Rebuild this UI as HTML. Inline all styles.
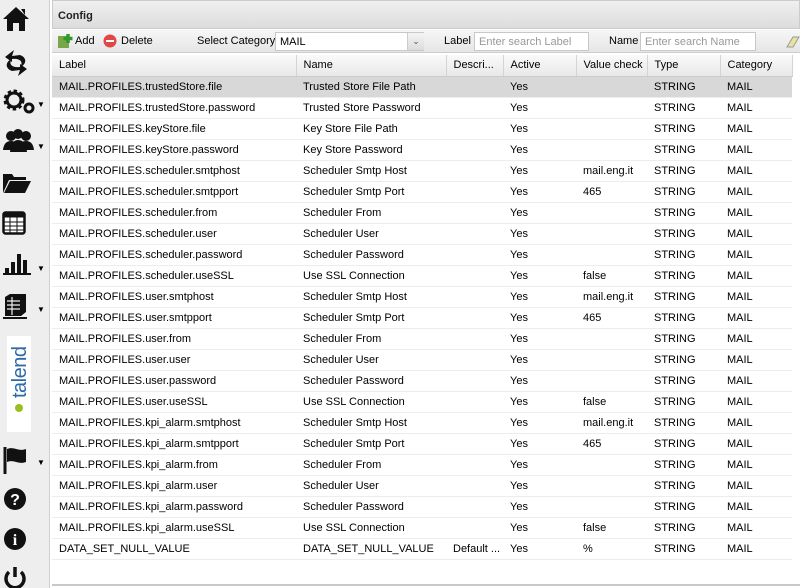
<!DOCTYPE html>
<html><head><meta charset="utf-8"><style>
*{box-sizing:border-box;margin:0;padding:0}
body{width:800px;height:588px;overflow:hidden;background:#fff;font-family:"Liberation Sans",sans-serif;font-size:11px;color:#000;position:relative}
#side{position:absolute;left:0;top:0;width:50px;height:588px;background:#eeeeee;border-right:1px solid #cfcfcf}
.ic{position:absolute;left:2px}
.dd{position:absolute;left:37px;font-size:8px}
#main{position:absolute;left:52px;top:0;width:748px;height:586px;border-bottom:2px solid #c8c8c8}
#hdr{height:29px;background:linear-gradient(#f0f0f0,#dcdcdc);border:1px solid #ccc;font-weight:bold;font-size:11px;padding:9px 0 0 5px;color:#222}
#tb{position:absolute;top:30px;left:0;width:748px;height:23px;background:linear-gradient(#f6f6f6,#e6e6e6);border-bottom:1px solid #ccc}
#tb span{position:absolute;top:5px;font-size:11px}
.inp{position:absolute;top:2px;height:19px;background:#fff;border:1px solid #c8c8c8;color:#999;padding:3px 4px;font-size:11px}
table{position:absolute;top:55px;left:0;width:740px;border-collapse:collapse;table-layout:fixed}
th{height:21px;background:linear-gradient(#fafafa,#e8e8e8);font-weight:normal;text-align:left;padding-left:7px;border-right:1px solid #d4d4d4;border-bottom:1px solid #ccc;white-space:nowrap;overflow:hidden}
td{height:21px;padding-left:7px;border-bottom:1px solid #ededed;white-space:nowrap;overflow:hidden}
tr.sel td{background:#d8d8d8}
</style></head><body>
<div id="side">
<svg class="ic" style="top:6px" width="28" height="26" viewBox="0 0 28 26"><path d="M14 1 L27 13 L23 13 L23 25 L17 25 L17 17 L11 17 L11 25 L5 25 L5 13 L1 13 Z M19 3 h4 v6 z" fill="#111"/></svg>
<svg class="ic" style="top:48px" width="28" height="30" viewBox="0 0 28 30"><path d="M12 2 L3 9 L10 14 L10 11 C18 10 22 14 18 19 C24 17 26 10 18 7 L10 8 Z M16 28 L25 21 L18 16 L18 19 C10 20 6 16 10 11 C4 13 2 20 10 23 L18 22 Z" fill="#111"/></svg>
<svg class="ic" style="top:88px" width="34" height="26" viewBox="0 0 34 26"><circle cx="12" cy="12" r="8" fill="none" stroke="#111" stroke-width="5" stroke-dasharray="3 2.3"/><circle cx="12" cy="12" r="7" fill="none" stroke="#111" stroke-width="3"/><circle cx="27" cy="20" r="4" fill="none" stroke="#111" stroke-width="3"/></svg><span class="dd" style="top:100px">▼</span>
<svg class="ic" style="top:128px" width="34" height="26" viewBox="0 0 34 26"><circle cx="9" cy="8" r="5" fill="#111"/><circle cx="24" cy="8" r="5" fill="#111"/><circle cx="16" cy="6" r="5" fill="#111"/><path d="M1 22 Q2 13 9 13 Q16 13 17 22Z M16 22 Q17 13 24 13 Q31 13 32 22Z M8 24 Q9 12 16 12 Q24 12 25 24Z" fill="#111"/></svg><span class="dd" style="top:142px">▼</span>
<svg class="ic" style="top:170px" width="30" height="24" viewBox="0 0 30 24"><path d="M1 4 h9 l2 3 h12 v3 H7 L1 23 Z M8 11 h21 L23 23 H2 Z" fill="#111"/></svg>
<svg class="ic" style="top:211px" width="26" height="26" viewBox="0 0 26 26"><rect x="1.5" y="1.5" width="21" height="21" rx="2" fill="#fff" stroke="#111" stroke-width="2.5"/><rect x="1.5" y="1.5" width="21" height="5" fill="#111"/><path d="M2 11h20M2 15h20M2 19h20M8 6v16M15 6v16" stroke="#111" stroke-width="1"/></svg>
<svg class="ic" style="top:252px" width="30" height="24" viewBox="0 0 30 24"><path d="M1 22h28" stroke="#111" stroke-width="2"/><rect x="3" y="16" width="4" height="6" fill="#111"/><rect x="9" y="10" width="4" height="12" fill="#111"/><rect x="15" y="2" width="4" height="20" fill="#111"/><rect x="21" y="8" width="4" height="14" fill="#111"/></svg><span class="dd" style="top:264px">▼</span>
<svg class="ic" style="top:292px" width="28" height="28" viewBox="0 0 28 28"><path d="M3 5 L8 2 H24 V20 L19 24 H3 Z" fill="#111"/><path d="M5 9h13M5 13h13M5 17h13M10 5v18" stroke="#eee" stroke-width="1.2"/><path d="M1 26h24" stroke="#111" stroke-width="2"/></svg><span class="dd" style="top:305px">▼</span>
<div style="position:absolute;left:7px;top:336px;width:24px;height:96px;background:#fff"></div>
<div style="position:absolute;left:9px;top:398px;height:22px;line-height:22px;font-size:20px;color:#2d68a8;transform-origin:0 0;transform:rotate(-90deg);white-space:nowrap;letter-spacing:-0.5px">talend</div>
<div style="position:absolute;left:15px;top:404px;width:8px;height:8px;border-radius:50%;background:#9bbf20"></div>
<svg class="ic" style="top:445px" width="30" height="30" viewBox="0 0 30 30"><path d="M3 2 v27" stroke="#111" stroke-width="3"/><path d="M5 4 C12 1 16 7 24 4 V17 C16 20 12 14 5 17 Z" fill="#111"/></svg><span class="dd" style="top:458px">▼</span>
<svg class="ic" style="top:487px;left:3px" width="24" height="24" viewBox="0 0 24 24"><circle cx="12" cy="12" r="11" fill="#111"/><text x="12" y="18" text-anchor="middle" font-family="Liberation Sans" font-weight="bold" font-size="16" fill="#fff">?</text></svg>
<svg class="ic" style="top:527px;left:3px" width="24" height="24" viewBox="0 0 24 24"><circle cx="12" cy="12" r="11" fill="#111"/><text x="12" y="18" text-anchor="middle" font-family="Liberation Serif" font-weight="bold" font-size="16" fill="#fff">i</text></svg>
<svg class="ic" style="top:566px;left:3px" width="24" height="22" viewBox="0 0 24 22"><path d="M6 6 A9 9 0 1 0 18 6" fill="none" stroke="#111" stroke-width="3.5"/><path d="M12 1 v10" stroke="#111" stroke-width="3.5"/></svg>
</div>
<div id="main">
<div id="hdr">Config</div>
<div id="tb">
<svg style="position:absolute;left:5px;top:3px" width="16" height="16" viewBox="0 0 16 16"><rect x="1" y="3" width="11" height="12" fill="#7aa64a"/><path d="M11 1v9M6.5 5.5h9" stroke="#2f9a2a" stroke-width="3.5"/></svg>
<span style="left:23px">Add</span>
<svg style="position:absolute;left:51px;top:4px" width="14" height="14" viewBox="0 0 14 14"><circle cx="7" cy="7" r="6.5" fill="#e04848"/><rect x="3" y="6" width="8" height="2" fill="#fff"/></svg>
<span style="left:69px">Delete</span>
<span style="left:145px">Select Category</span>
<div class="inp" style="left:223px;width:149px;color:#000">MAIL</div>
<div style="position:absolute;left:355px;top:3px;width:17px;height:17px;background:linear-gradient(#f4f4f4,#dcdcdc);border-left:1px solid #ccc;font-size:9px;text-align:center;line-height:17px;color:#555">⌄</div>
<span style="left:392px">Label</span>
<div class="inp" style="left:422px;width:115px">Enter search Label</div>
<span style="left:557px">Name</span>
<div class="inp" style="left:588px;width:116px">Enter search Name</div>
<svg style="position:absolute;left:733px;top:5px" width="15" height="13" viewBox="0 0 15 13"><path d="M2 12 L8 2 H14 L8 12 Z" fill="#e8e4a0" stroke="#999"/></svg>
</div>
<table>
<colgroup><col style="width:244px"><col style="width:150px"><col style="width:57px"><col style="width:73px"><col style="width:71px"><col style="width:73px"><col style="width:72px"></colgroup>
<tr><th>Label</th><th>Name</th><th>Descri...</th><th>Active</th><th>Value check</th><th>Type</th><th>Category</th></tr>
<tr class="sel"><td>MAIL.PROFILES.trustedStore.file</td><td>Trusted Store File Path</td><td></td><td>Yes</td><td></td><td>STRING</td><td>MAIL</td></tr>
<tr><td>MAIL.PROFILES.trustedStore.password</td><td>Trusted Store Password</td><td></td><td>Yes</td><td></td><td>STRING</td><td>MAIL</td></tr>
<tr><td>MAIL.PROFILES.keyStore.file</td><td>Key Store File Path</td><td></td><td>Yes</td><td></td><td>STRING</td><td>MAIL</td></tr>
<tr><td>MAIL.PROFILES.keyStore.password</td><td>Key Store Password</td><td></td><td>Yes</td><td></td><td>STRING</td><td>MAIL</td></tr>
<tr><td>MAIL.PROFILES.scheduler.smtphost</td><td>Scheduler Smtp Host</td><td></td><td>Yes</td><td>mail.eng.it</td><td>STRING</td><td>MAIL</td></tr>
<tr><td>MAIL.PROFILES.scheduler.smtpport</td><td>Scheduler Smtp Port</td><td></td><td>Yes</td><td>465</td><td>STRING</td><td>MAIL</td></tr>
<tr><td>MAIL.PROFILES.scheduler.from</td><td>Scheduler From</td><td></td><td>Yes</td><td></td><td>STRING</td><td>MAIL</td></tr>
<tr><td>MAIL.PROFILES.scheduler.user</td><td>Scheduler User</td><td></td><td>Yes</td><td></td><td>STRING</td><td>MAIL</td></tr>
<tr><td>MAIL.PROFILES.scheduler.password</td><td>Scheduler Password</td><td></td><td>Yes</td><td></td><td>STRING</td><td>MAIL</td></tr>
<tr><td>MAIL.PROFILES.scheduler.useSSL</td><td>Use SSL Connection</td><td></td><td>Yes</td><td>false</td><td>STRING</td><td>MAIL</td></tr>
<tr><td>MAIL.PROFILES.user.smtphost</td><td>Scheduler Smtp Host</td><td></td><td>Yes</td><td>mail.eng.it</td><td>STRING</td><td>MAIL</td></tr>
<tr><td>MAIL.PROFILES.user.smtpport</td><td>Scheduler Smtp Port</td><td></td><td>Yes</td><td>465</td><td>STRING</td><td>MAIL</td></tr>
<tr><td>MAIL.PROFILES.user.from</td><td>Scheduler From</td><td></td><td>Yes</td><td></td><td>STRING</td><td>MAIL</td></tr>
<tr><td>MAIL.PROFILES.user.user</td><td>Scheduler User</td><td></td><td>Yes</td><td></td><td>STRING</td><td>MAIL</td></tr>
<tr><td>MAIL.PROFILES.user.password</td><td>Scheduler Password</td><td></td><td>Yes</td><td></td><td>STRING</td><td>MAIL</td></tr>
<tr><td>MAIL.PROFILES.user.useSSL</td><td>Use SSL Connection</td><td></td><td>Yes</td><td>false</td><td>STRING</td><td>MAIL</td></tr>
<tr><td>MAIL.PROFILES.kpi_alarm.smtphost</td><td>Scheduler Smtp Host</td><td></td><td>Yes</td><td>mail.eng.it</td><td>STRING</td><td>MAIL</td></tr>
<tr><td>MAIL.PROFILES.kpi_alarm.smtpport</td><td>Scheduler Smtp Port</td><td></td><td>Yes</td><td>465</td><td>STRING</td><td>MAIL</td></tr>
<tr><td>MAIL.PROFILES.kpi_alarm.from</td><td>Scheduler From</td><td></td><td>Yes</td><td></td><td>STRING</td><td>MAIL</td></tr>
<tr><td>MAIL.PROFILES.kpi_alarm.user</td><td>Scheduler User</td><td></td><td>Yes</td><td></td><td>STRING</td><td>MAIL</td></tr>
<tr><td>MAIL.PROFILES.kpi_alarm.password</td><td>Scheduler Password</td><td></td><td>Yes</td><td></td><td>STRING</td><td>MAIL</td></tr>
<tr><td>MAIL.PROFILES.kpi_alarm.useSSL</td><td>Use SSL Connection</td><td></td><td>Yes</td><td>false</td><td>STRING</td><td>MAIL</td></tr>
<tr><td>DATA_SET_NULL_VALUE</td><td>DATA_SET_NULL_VALUE</td><td>Default ...</td><td>Yes</td><td>%</td><td>STRING</td><td>MAIL</td></tr>
</table>
</div>
</body></html>
